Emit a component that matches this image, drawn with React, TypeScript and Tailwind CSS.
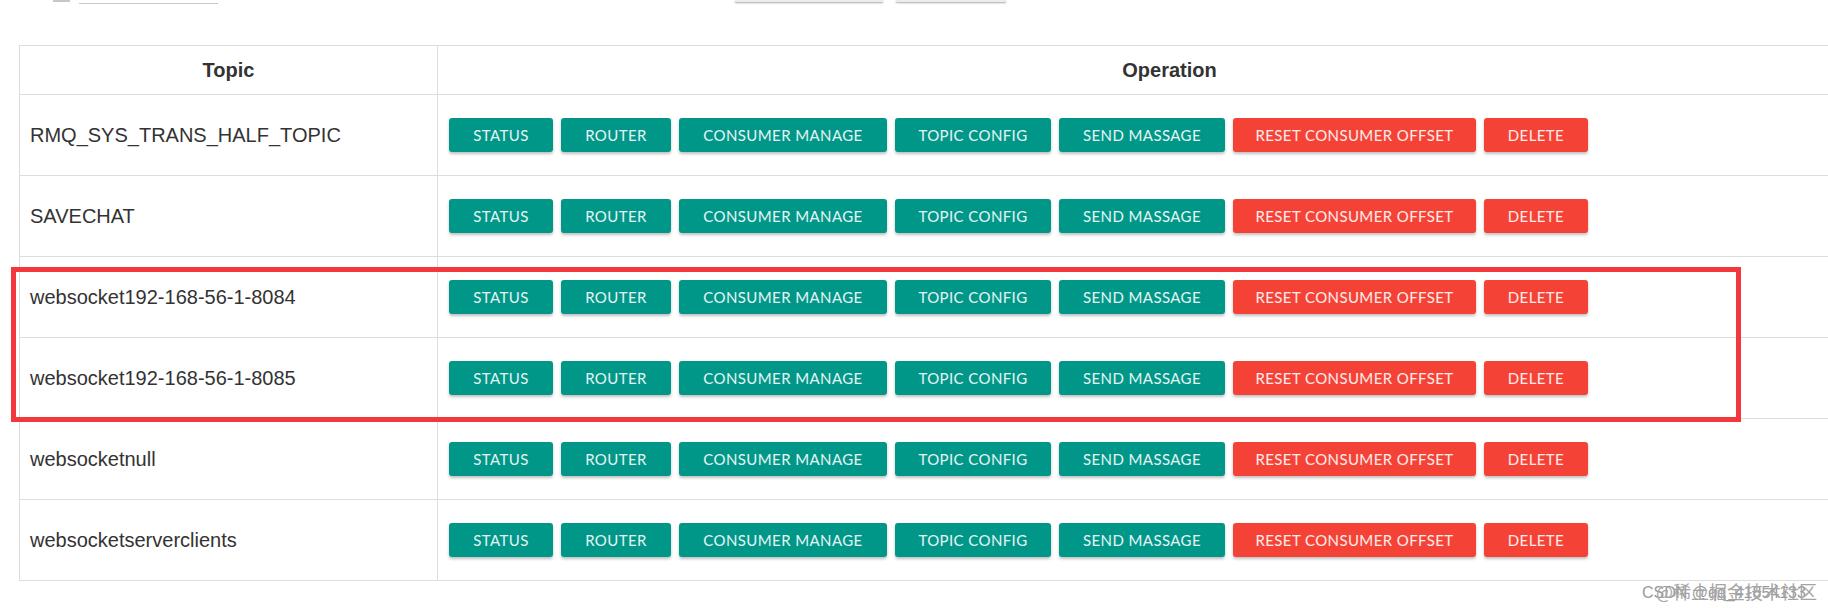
import React from 'react'

interface Action {
  label: string
  width: string
  danger?: boolean
}

const actions: Action[] = [
  { label: 'Status', width: 'w-[104px]' },
  { label: 'Router', width: 'w-[110px]' },
  { label: 'Consumer Manage', width: 'w-[208px]' },
  { label: 'Topic Config', width: 'w-[156px]' },
  { label: 'Send Massage', width: 'w-[166px]' },
  { label: 'Reset Consumer Offset', width: 'w-[243px]', danger: true },
  { label: 'Delete', width: 'w-[104px]', danger: true },
]

const topics = [
  'RMQ_SYS_TRANS_HALF_TOPIC',
  'SAVECHAT',
  'websocket192-168-56-1-8084',
  'websocket192-168-56-1-8085',
  'websocketnull',
  'websocketserverclients',
]

function ActionButton({ action }: { action: Action }) {
  return (
    <button
      className={`${action.width} h-[34px] shrink-0 rounded-[3px] uppercase text-[15px] tracking-[0.4px] text-white/90 font-['Lato',sans-serif] shadow-[0_2px_3px_rgba(0,0,0,0.25)] ${
        action.danger ? 'bg-[#f44336]' : 'bg-[#009688]'
      }`}
    >
      {action.label}
    </button>
  )
}

export default function App() {
  return (
    <div className="relative h-[608px] w-full overflow-hidden bg-white font-['Liberation_Sans',Arial,sans-serif] text-[#333]">
      {/* toolbar above, scrolled mostly out of view */}
      <div className="flex h-[45px] items-start">
        <span className="ml-[53px] h-[2px] w-[17px] bg-[#c8c8c8]" />
        <span className="ml-[9px] h-[4px] w-[139px] border-b border-[#c8c8c8]" />
        <span className="ml-[517px] h-[2px] w-[148px] bg-[#ececec] shadow-[0_1px_2px_rgba(0,0,0,0.35)]" />
        <span className="ml-[13px] h-[2px] w-[110px] bg-[#ececec] shadow-[0_1px_2px_rgba(0,0,0,0.35)]" />
      </div>

      {/* topic table */}
      <div className="ml-[19px] w-[1882px] border-l border-t border-[#dddddd]">
        <div className="flex h-[49px] border-b border-[#dddddd] text-[20px] font-bold">
          <div className="flex w-[418px] items-center justify-center border-r border-[#dddddd]">Topic</div>
          <div className="flex flex-1 items-center justify-center">Operation</div>
        </div>
        {topics.map((topic) => (
          <div key={topic} className="flex h-[81px] border-b border-[#dddddd]">
            <div className="flex w-[418px] items-center border-r border-[#dddddd] pl-[10px] text-[20px]">
              {topic}
            </div>
            <div className="flex flex-1 items-center gap-[8px] pl-[11px]">
              {actions.map((a) => (
                <ActionButton key={a.label} action={a} />
              ))}
            </div>
          </div>
        ))}
      </div>

      {/* highlight annotation */}
      <div className="absolute left-[11px] top-[267px] h-[155px] w-[1730px] border-[5px] border-[#f2383c]" />

      {/* overlapping watermarks */}
      <div className="absolute left-[1642px] top-[585px] whitespace-nowrap text-[16px] leading-none text-[#9a9a9a]">
        CSDN @qq_41854133
      </div>
      <div className="absolute left-[1656px] top-[582px] whitespace-nowrap text-[18px] leading-none text-[#a5a5a5] font-['Noto_Sans_CJK_SC',sans-serif]">
        @稀土掘金技术社区
      </div>
    </div>
  )
}
